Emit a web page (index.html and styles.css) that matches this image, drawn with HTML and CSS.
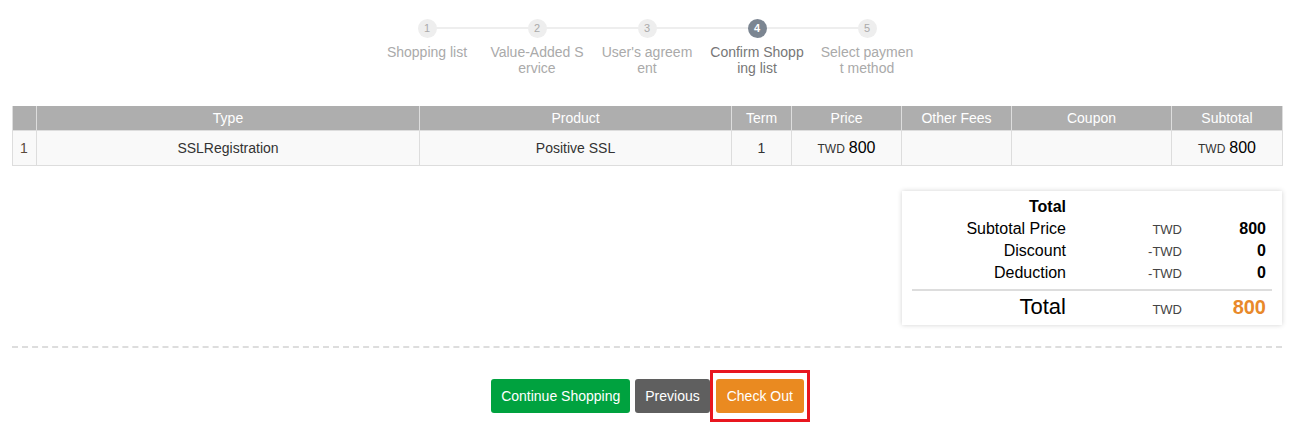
FILE: index.html
```html
<!DOCTYPE html>
<html lang="en"><head>
	<meta charset='utf-8'>
	<title>Confirm Shopping list</title>
	<link rel="stylesheet" href="styles.css">
</head><body>
<div class="page">
	<ol class="steps">
		<li class="step"><span class="dot">1</span><span class="label">Shopping list</span></li>
		<li class="step"><span class="dot">2</span><span class="label">Value-Added Service</span></li>
		<li class="step"><span class="dot">3</span><span class="label">User's agreement</span></li>
		<li class="step active"><span class="dot">4</span><span class="label">Confirm Shopping list</span></li>
		<li class="step"><span class="dot">5</span><span class="label">Select payment method</span></li>
	</ol>

	<table class="cart">
		<colgroup>
			<col style="width:24px"><col style="width:383px"><col style="width:312px"><col style="width:60px">
			<col style="width:110px"><col style="width:110px"><col style="width:160px"><col style="width:111px">
		</colgroup>
		<thead><tr>
			<th></th><th>Type</th><th>Product</th><th>Term</th><th>Price</th><th>Other Fees</th><th>Coupon</th><th>Subtotal</th>
		</tr></thead>
		<tbody><tr>
			<td class="num">1</td>
			<td>SSLRegistration</td>
			<td>Positive SSL</td>
			<td>1</td>
			<td><span class="cur">TWD</span> <span class="amt">800</span></td>
			<td></td>
			<td></td>
			<td><span class="cur">TWD</span> <span class="amt">800</span></td>
		</tr></tbody>
	</table>

	<div class="summary-wrap">
		<div class="summary">
			<div class="row head"><span class="name">Total</span></div>
			<div class="row"><span class="name">Subtotal Price</span><span class="cur">TWD</span><span class="val">800</span></div>
			<div class="row"><span class="name">Discount</span><span class="cur">-TWD</span><span class="val">0</span></div>
			<div class="row"><span class="name">Deduction</span><span class="cur">-TWD</span><span class="val">0</span></div>
			<div class="row grand"><span class="name">Total</span><span class="cur">TWD</span><span class="val">800</span></div>
		</div>
	</div>

	<div class="actions">
		<button class="btn green">Continue Shopping</button>
		<button class="btn gray">Previous</button>
		<span class="mark"><button class="btn orange">Check Out</button></span>
	</div>
</div>
</body></html>
```

FILE: styles.css
```css
* { box-sizing:border-box }
html, body { margin:0; padding:0; background:#fff }
body { font-family:'Liberation Sans', Arial, sans-serif; font-size:14px; color:#333 }
.page { width:1270px; margin-left:12px }

/* steps */
.steps { list-style:none; margin:0; padding:19px 0 0; display:flex; justify-content:center }
.step { position:relative; width:110px; display:flex; flex-direction:column; align-items:center }
.step::before { content:''; position:absolute; top:8px; left:-50%; width:100%; height:2px; background:#eee; z-index:0 }
.step:first-child::before { display:none }
.dot { position:relative; z-index:1; width:19px; height:19px; border-radius:50%; background:#eee; color:#aaa; font-size:11px; line-height:19px; text-align:center }
.label { width:94px; margin-top:6px; text-align:center; line-height:16px; color:#aaa; word-break:break-all }
.step.active .dot { background:#7b8591; color:#fff; font-weight:bold }
.step.active .label { color:#777 }

/* cart table */
.cart { width:100%; table-layout:fixed; border-collapse:collapse; margin-top:30px }
.cart th { background:#aeaeae; color:#fff; font-weight:normal; height:24px; padding:0 4px; border:1px solid #ddd; border-top:0 }
.cart td { background:#f9f9f9; border:1px solid #ddd; height:35px; text-align:center; padding:0 4px }
.cart td.num { text-align:left; padding-left:7px; color:#5a4a3a }
.cur { font-size:12px; color:#333 }
.amt { font-size:16px; color:#000 }

/* summary */
.summary-wrap { display:flex; justify-content:flex-end; margin-top:25px }
.summary { width:380px; padding:5px 10px 3px; background:#fff; box-shadow:0 0 5px rgba(0,0,0,.18) }
.summary .row { display:grid; grid-template-columns:154px 116px 1fr; align-items:baseline; height:22px; line-height:22px; font-size:16px; color:#000 }
.summary .name { text-align:right }
.summary .cur { text-align:right; font-size:13px; color:#444 }
.summary .val { text-align:right; font-weight:bold; padding-right:6px }
.summary .head .name { font-weight:bold }
.summary .grand { border-top:2px solid #ddd; margin-top:5px; height:33px; line-height:32px; font-size:22px }
.summary .grand .val { font-size:20px; color:#e8892a }

/* actions */
.actions { border-top:2px dashed #ddd; margin-top:21px; padding:22px 0 0 7px; display:flex; justify-content:center; align-items:center }
.btn { font-family:'Liberation Sans', Arial, sans-serif; font-size:14px; color:#fff; border:0; border-radius:3px; height:34px; padding:0 10px; cursor:pointer }
.green { background:#00a23f; margin-right:5px }
.gray { background:#5f5f5f }
.orange { background:#ea8a20; padding:0 11px }
.mark { display:inline-block; border:3px solid #e8161f; padding:6px 3px }
```
